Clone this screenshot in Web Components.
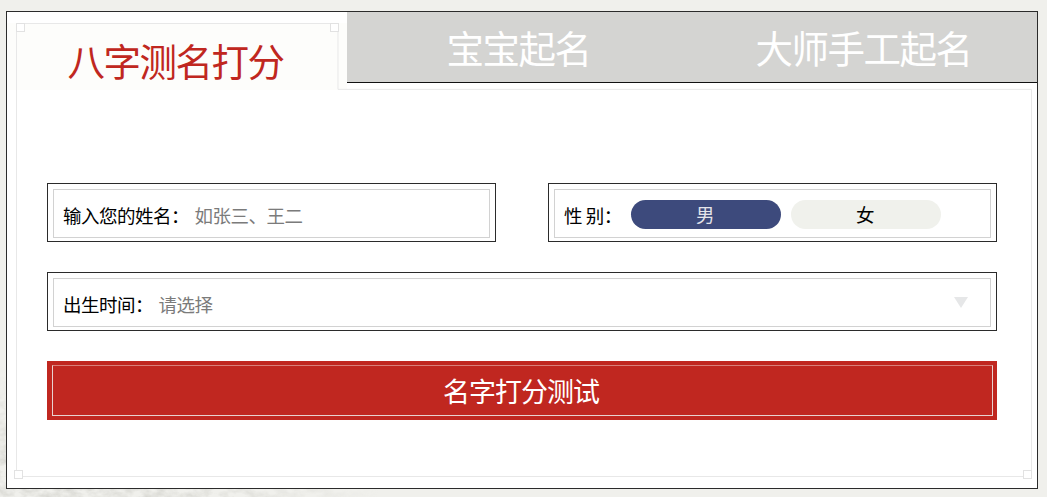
<!DOCTYPE html>
<html lang="zh">
<head>
<meta charset="utf-8">
<title>八字测名打分</title>
<style>
  html, body { margin: 0; height: 100%; }
  body {
    background: #f0f0ec;
    overflow: hidden;
    font-family: "Noto Sans CJK SC", "Liberation Sans", sans-serif;
  }
</style>
</head>
<body>
<paper-texture></paper-texture>
<name-panel>
  <tab-item slot="tabs" active>八字测名打分</tab-item>
  <tab-item slot="tabs">宝宝起名</tab-item>
  <tab-item slot="tabs">大师手工起名</tab-item>
  <form-row>
    <form-field label="输入您的姓名：" placeholder="如张三、王二"></form-field>
    <form-field label="性 别：">
      <gender-pill active>男</gender-pill>
      <gender-pill>女</gender-pill>
    </form-field>
  </form-row>
  <form-row>
    <form-field label="出生时间：" placeholder="请选择" select></form-field>
  </form-row>
  <submit-button>名字打分测试</submit-button>
</name-panel>

<script>
// mottled paper showing at the bottom left of the page
class PaperTexture extends HTMLElement {
  connectedCallback() {
    this.attachShadow({ mode: 'open' });
    this.shadowRoot.innerHTML = `
      <style>
        :host { position: absolute; inset: 0; z-index: -1; }
        svg { display: block; width: 100%; height: 100%; }
      </style>
      <svg viewBox="0 0 1047 497">
        <defs>
          <filter id="mottle" x="0" y="0" width="100%" height="100%">
            <feTurbulence type="fractalNoise" baseFrequency="0.09 0.14" numOctaves="3" seed="7"/>
            <feColorMatrix values="0 0 0 0 .62  0 0 0 0 .62  0 0 0 0 .58  1.6 0 0 0 -.55"/>
          </filter>
          <radialGradient id="fade" gradientUnits="userSpaceOnUse" cx="40" cy="497" r="340" gradientTransform="translate(0 300) scale(1 .4)">
            <stop offset="0" stop-color="#fff"/>
            <stop offset=".55" stop-color="#fff" stop-opacity=".7"/>
            <stop offset="1" stop-color="#fff" stop-opacity="0"/>
          </radialGradient>
          <mask id="edge"><rect width="1047" height="497" fill="url(#fade)"/></mask>
        </defs>
        <g mask="url(#edge)"><rect width="1047" height="497" filter="url(#mottle)"/></g>
      </svg>
    `;
  }
}

class NamePanel extends HTMLElement {
  connectedCallback() {
    this.attachShadow({ mode: 'open' });
    this.shadowRoot.innerHTML = `
      <style>
        :host {
          display: block;
          box-sizing: border-box;
          width: 1032px;
          height: 478px;
          margin: 11px 0 0 6px;
          border: 1px solid #2b2b2b;
          background: #fff;
          position: relative;
        }
        .tabs {
          display: grid;
          grid-template-columns: 340px 345px 345px;
          height: 71px;
          position: relative;
        }
        .frame {
          position: absolute;
          inset: 11px 5px 11px 9px;
          pointer-events: none;
        }
        /* notched outline: tall part round the active tab, wide part round the body */
        .frame svg { display: block; width: 100%; height: 100%; }
        .body {
          padding: 100px 40px 0;
          display: flex;
          flex-direction: column;
          gap: 30px;
        }
        .corner {
          position: absolute;
          width: 7px;
          height: 7px;
          border: 1px solid #e2e2e2;
          background: #fff;
        }
      </style>
      <div class="tabs"><slot name="tabs"></slot></div>
      <div class="frame">
        <svg viewBox="0 0 1016 455" preserveAspectRatio="none" fill="none" stroke="#e8e8e8" stroke-width="1">
          <path d="M.5 .5H322V66.5H1015.5V454.5H.5Z" />
        </svg>
      </div>
      <div class="corner" style="left:9px;top:11px"></div>
      <div class="corner" style="left:323px;top:11px"></div>
      <div class="corner" style="left:7px;top:458px"></div>
      <div class="corner" style="left:1016px;top:458px"></div>
      <div class="body"><slot></slot></div>
    `;
  }
}

class TabItem extends HTMLElement {
  connectedCallback() {
    this.attachShadow({ mode: 'open' });
    this.shadowRoot.innerHTML = `
      <style>
        :host {
          display: flex;
          align-items: center;
          justify-content: center;
          height: 71px;
          box-sizing: border-box;
          padding: 0 2px 1px 0;
          font-size: 37.5px;
          letter-spacing: -1.5px;
          background: #d4d4d2;
          color: #fff;
          border-bottom: 1px solid #111;
        }
        :host([active]) {
          background: linear-gradient(#fff 11px, #fdfdfb 11px);
          color: #c02720;
          border-bottom: 0;
          height: 78px;
          padding: 17px 3px 0 0;
        }
      </style>
      <slot></slot>
    `;
  }
}

class FormRow extends HTMLElement {
  connectedCallback() {
    this.attachShadow({ mode: 'open' });
    this.shadowRoot.innerHTML = `
      <style>
        :host { display: flex; gap: 52px; }
        ::slotted(*) { flex: 1; }
      </style>
      <slot></slot>
    `;
  }
}

class FormField extends HTMLElement {
  connectedCallback() {
    this.attachShadow({ mode: 'open' });
    const label = this.getAttribute('label');
    const placeholder = this.getAttribute('placeholder');
    const arrow = this.hasAttribute('select')
      ? '<svg class="arrow" viewBox="0 0 14 11" width="14" height="11"><path d="M0 0H14L7 11Z" fill="#e6e7e8"/></svg>'
      : '';
    this.shadowRoot.innerHTML = `
      <style>
        :host {
          display: block;
          box-sizing: border-box;
          height: 59px;
          border: 1px solid #2b2b2b;
          padding: 5px;
          min-width: 0;
        }
        .inner {
          box-sizing: border-box;
          height: 49px;
          border: 1px solid #d2d2d2;
          padding: 0 22px 0 9px;
          display: flex;
          align-items: center;
          font-size: 18.5px;
          letter-spacing: -.5px;
          color: #000;
        }
        .label, .ph { position: relative; top: 1px; }
        .ph { color: #7b7b7b; margin-left: 5.5px; flex: 1; }
        .opts { display: flex; gap: 10px; margin: 2px 0 0 9.5px; letter-spacing: 0; }
      </style>
      <div class="inner">
        <span class="label">${label}</span>
        ${placeholder ? `<span class="ph">${placeholder}</span>` : '<div class="opts"><slot></slot></div>'}
        ${arrow}
      </div>
    `;
  }
}

class GenderPill extends HTMLElement {
  connectedCallback() {
    this.attachShadow({ mode: 'open' });
    this.shadowRoot.innerHTML = `
      <style>
        :host {
          display: flex;
          align-items: center;
          justify-content: center;
          box-sizing: border-box;
          width: 150px;
          height: 29px;
          padding: 0 2px 2px 0;
          border-radius: 15px;
          background: #f0f1ec;
          color: #000;
          font-size: 18.5px;
        }
        :host([active]) { background: #3d4a7c; color: #e4e4ea; }
      </style>
      <slot></slot>
    `;
  }
}

class SubmitButton extends HTMLElement {
  connectedCallback() {
    this.attachShadow({ mode: 'open' });
    this.shadowRoot.innerHTML = `
      <style>
        :host {
          display: block;
          box-sizing: border-box;
          height: 59px;
          padding: 4px 4px 4px 5px;
          background: #c02720;
        }
        .inner {
          box-sizing: border-box;
          height: 100%;
          border: 1px solid #e8d2cf;
          border-top-color: #d97f79;
          display: flex;
          align-items: center;
          justify-content: center;
          color: #fff;
          font-size: 27px;
          letter-spacing: -1px;
          padding-right: 3px;
        }
      </style>
      <div class="inner"><slot></slot></div>
    `;
  }
}

customElements.define('paper-texture', PaperTexture);
customElements.define('name-panel', NamePanel);
customElements.define('tab-item', TabItem);
customElements.define('form-row', FormRow);
customElements.define('form-field', FormField);
customElements.define('gender-pill', GenderPill);
customElements.define('submit-button', SubmitButton);
</script>
</body>
</html>
